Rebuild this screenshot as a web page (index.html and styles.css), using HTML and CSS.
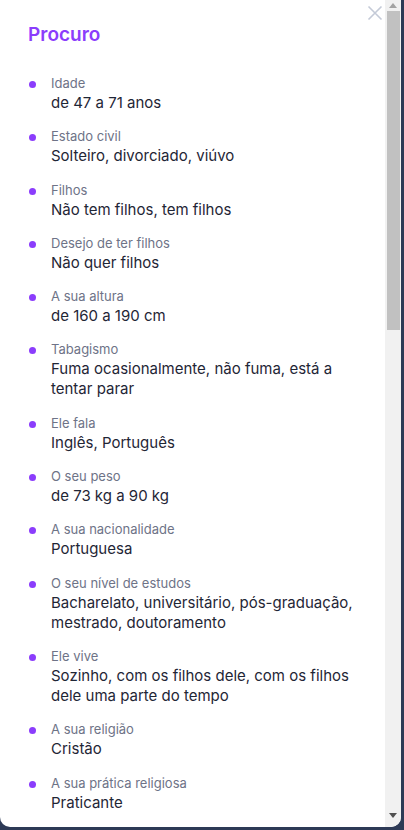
FILE: index.html
```html
<!DOCTYPE html>
<html lang="pt">

<head>
  <meta charset="UTF-8">
  <meta name="viewport" content="width=device-width, initial-scale=1.0">
  <title>Procuro</title>
  <link rel="stylesheet" href="styles.css">
</head>

<body>
  <div class="modal">
    <button class="close" aria-label="Fechar">
      <svg width="16" height="16" viewBox="0 0 16 16">
        <path d="M1.5 1.5 L14.5 14.5 M14.5 1.5 L1.5 14.5" stroke="currentColor" stroke-width="1.6" fill="none" />
      </svg>
    </button>

    <div class="modal-body">
      <h2>Procuro</h2>

      <ul class="criteria">
        <li><i></i>
          <div><span>Idade</span><p>de 47 a 71 anos</p></div>
        </li>
        <li><i></i>
          <div><span>Estado civil</span><p>Solteiro, divorciado, viúvo</p></div>
        </li>
        <li><i></i>
          <div><span>Filhos</span><p>Não tem filhos, tem filhos</p></div>
        </li>
        <li><i></i>
          <div><span>Desejo de ter filhos</span><p>Não quer filhos</p></div>
        </li>
        <li><i></i>
          <div><span>A sua altura</span><p>de 160 a 190 cm</p></div>
        </li>
        <li><i></i>
          <div><span>Tabagismo</span><p>Fuma ocasionalmente, não fuma, está a tentar parar</p></div>
        </li>
        <li><i></i>
          <div><span>Ele fala</span><p>Inglês, Português</p></div>
        </li>
        <li><i></i>
          <div><span>O seu peso</span><p>de 73 kg a 90 kg</p></div>
        </li>
        <li><i></i>
          <div><span>A sua nacionalidade</span><p>Portuguesa</p></div>
        </li>
        <li><i></i>
          <div><span>O seu nível de estudos</span><p>Bacharelato, universitário, pós-graduação, mestrado, doutoramento</p></div>
        </li>
        <li><i></i>
          <div><span>Ele vive</span><p>Sozinho, com os filhos dele, com os filhos dele uma parte do tempo</p></div>
        </li>
        <li><i></i>
          <div><span>A sua religião</span><p>Cristão</p></div>
        </li>
        <li><i></i>
          <div><span>A sua prática religiosa</span><p>Praticante</p></div>
        </li>
      </ul>
    </div>

    <!-- barra de scroll dibujada, el navegador headless no la pinta -->
    <div class="scrollbar">
      <span class="arrow up">
        <svg width="8" height="5" viewBox="0 0 8 5"><path d="M0 5 L4 0 L8 5 Z" fill="currentColor" /></svg>
      </span>
      <div class="track"><b></b></div>
      <span class="arrow down">
        <svg width="8" height="5" viewBox="0 0 8 5"><path d="M0 0 L8 0 L4 5 Z" fill="currentColor" /></svg>
      </span>
    </div>
  </div>
</body>

</html>
```

FILE: styles.css
```css
* {
  box-sizing: border-box;
}

body {
  margin: 0;
  height: 100vh;
  overflow: hidden;
  background-color: #2d3a56;
  font-family: Inter, 'Open Sans', sans-serif;
}

.modal {
  position: relative;
  display: flex;
  width: 401px;
  height: 827px;
  background-color: white;
  border-radius: 0 0 10px 10px;
  overflow: hidden;
}

.close {
  position: absolute;
  top: 5px;
  right: 18px;
  z-index: 1;
  padding: 0;
  border: 0;
  background: none;
  color: #c4cad7;
  cursor: pointer;
  line-height: 0;
}

.modal-body {
  flex: 1;
  overflow: hidden;
  padding: 23px 0 0 28px;

  h2 {
    margin: 0;
    font-size: 19px;
    line-height: 24px;
    font-weight: 600;
    color: #8b3dfc;
  }
}

.scrollbar {
  flex: none;
  width: 16px;
  display: flex;
  flex-direction: column;
  background-color: #f1f1f1;
  padding: 0 0 2px;

  .arrow {
    display: flex;
    justify-content: center;
    line-height: 0;
    height: 11px;
    padding-top: 3px;

    &.up {
      color: #a3a3a3;
    }

    &.down {
      height: 20px;
      padding-top: 8px;
      color: #505050;
    }
  }

  .track {
    flex: 1;
    padding: 0 1px 0 2px;

    b {
      display: block;
      height: 319px;
      background-color: #c1c1c1;
    }
  }
}

.criteria {
  list-style: none;
  margin: 26px 0 0;
  padding: 0;
  display: flex;
  flex-direction: column;
  gap: 13.3px;

  li {
    display: flex;
    align-items: flex-start;
  }

  i {
    flex: none;
    width: 7px;
    height: 7px;
    margin: 8px 15px 0 1px;
    border-radius: 50%;
    background-color: #8b3dfc;
  }

  div {
    width: 318px;
  }

  span {
    display: block;
    font-size: 13px;
    line-height: 20px;
    color: #6e7387;
  }

  p {
    margin: 0;
    font-size: 15px;
    line-height: 20px;
    color: #1f2636;
  }
}
```
